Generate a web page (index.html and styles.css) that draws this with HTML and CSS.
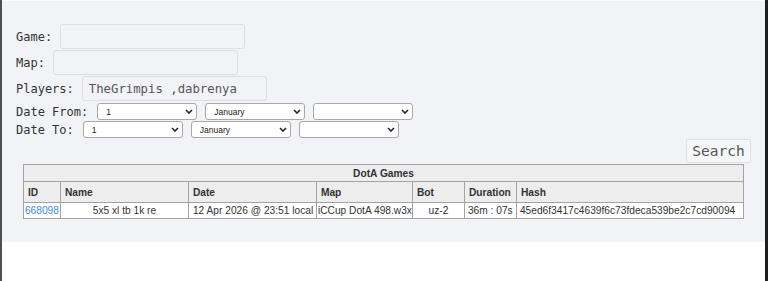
FILE: index.html
```html
<!DOCTYPE html>
<html lang="en">
<head>
    <meta charset="UTF-8">
    <meta name="viewport" content="width=device-width, initial-scale=1.0">
    <title>DotA Games</title>
    <link rel="stylesheet" href="styles.css">
</head>
<body>
    <div class="panel">
        <form class="search-form">
            <div class="field">
                <label>Game:</label>
                <input type="text" class="text-input">
            </div>
            <div class="field">
                <label>Map:</label>
                <input type="text" class="text-input">
            </div>
            <div class="field">
                <label>Players:</label>
                <input type="text" class="text-input" value="TheGrimpis ,dabrenya">
            </div>
            <div class="field date-row date-from">
                <label>Date From:</label>
                <span class="select-wrap">
                    <select><option>1</option></select>
                    <svg class="chevron" viewBox="0 0 8 5"><path d="M1 1l3 3 3-3"/></svg>
                </span>
                <span class="select-wrap">
                    <select><option>January</option></select>
                    <svg class="chevron" viewBox="0 0 8 5"><path d="M1 1l3 3 3-3"/></svg>
                </span>
                <span class="select-wrap">
                    <select><option></option></select>
                    <svg class="chevron" viewBox="0 0 8 5"><path d="M1 1l3 3 3-3"/></svg>
                </span>
            </div>
            <div class="field date-row">
                <label>Date To:</label>
                <span class="select-wrap">
                    <select><option>1</option></select>
                    <svg class="chevron" viewBox="0 0 8 5"><path d="M1 1l3 3 3-3"/></svg>
                </span>
                <span class="select-wrap">
                    <select><option>January</option></select>
                    <svg class="chevron" viewBox="0 0 8 5"><path d="M1 1l3 3 3-3"/></svg>
                </span>
                <span class="select-wrap">
                    <select><option></option></select>
                    <svg class="chevron" viewBox="0 0 8 5"><path d="M1 1l3 3 3-3"/></svg>
                </span>
            </div>
            <div class="actions">
                <button type="button" class="search-btn">Search</button>
            </div>
        </form>

        <table class="games">
            <colgroup>
                <col class="c-id">
                <col class="c-name">
                <col class="c-date">
                <col class="c-map">
                <col class="c-bot">
                <col class="c-dur">
                <col class="c-hash">
            </colgroup>
            <tr class="caption-row">
                <th colspan="7">DotA Games</th>
            </tr>
            <tr class="head-row">
                <th>ID</th>
                <th>Name</th>
                <th>Date</th>
                <th>Map</th>
                <th>Bot</th>
                <th>Duration</th>
                <th>Hash</th>
            </tr>
            <tr class="data-row">
                <td class="id"><a href="#">668098</a></td>
                <td class="center">5x5 xl tb 1k re</td>
                <td class="date">12 Apr 2026 @ 23:51 local</td>
                <td class="map">iCCup DotA 498.w3x</td>
                <td class="center">uz-2</td>
                <td>36m : 07s</td>
                <td>45ed6f3417c4639f6c73fdeca539be2c7cd90094</td>
            </tr>
        </table>
    </div>
</body>
</html>
```

FILE: styles.css
```css
html, body {
    height: 100%;
}
body {
    margin: 0;
    background-color: #fff;
    border-left: 2px solid #4f4f4f;
    border-right: 3px solid #1e1e1e;
    font-family: "DejaVu Sans Mono", monospace;
    color: #333;
}
.panel {
    background-color: #f2f3f7;
    border-top: 1px solid #fbfbfc;
    padding: 23px 14px 23px 14px;
}
.search-form {
    display: flex;
    flex-direction: column;
    gap: 1px;
}
.field {
    display: flex;
    align-items: center;
    gap: 8px;
    font-size: 12px;
}
.field label {
    color: #333;
}
.date-row label {
    margin-right: 1px;
}
.text-input {
    box-sizing: border-box;
    width: 185px;
    height: 25px;
    margin: 0;
    padding: 0 6px;
    border: 1px solid #dcdde2;
    border-radius: 3px;
    background-color: #f2f3f7;
    font-family: "DejaVu Sans Mono", monospace;
    font-size: 12.3px;
    color: #555;
}
.date-row {
    height: 17px;
}
.date-from {
    margin-top: 1px;
}
.select-wrap {
    position: relative;
    display: inline-block;
    width: 100px;
    height: 17px;
}
.select-wrap select {
    appearance: none;
    -webkit-appearance: none;
    box-sizing: border-box;
    width: 100px;
    height: 17px;
    margin: 0;
    padding: 0 0 0 8px;
    border: 1px solid #a9a9ad;
    border-radius: 3px;
    background-color: #fff;
    font-family: "Liberation Sans", Arial, sans-serif;
    font-size: 8.5px;
    color: #222;
}
.chevron {
    position: absolute;
    right: 4px;
    top: 6px;
    width: 8px;
    height: 5px;
    fill: none;
    stroke: #222;
    stroke-width: 1.6;
    pointer-events: none;
}
.actions {
    display: flex;
    justify-content: flex-end;
}
.search-btn {
    box-sizing: border-box;
    height: 24px;
    width: 65px;
    padding: 0;
    border: 1px solid #dfe0e4;
    border-radius: 2px;
    background-color: #f5f6f8;
    font-family: "DejaVu Sans Mono", monospace;
    font-size: 14.5px;
    color: #555;
}
.games {
    table-layout: fixed;
    width: 720px;
    margin: 1px auto 0;
    border-collapse: collapse;
    font-family: "Liberation Sans", Arial, sans-serif;
    font-size: 10.2px;
    color: #333;
}
.c-id { width: 37px; }
.c-name { width: 128px; }
.c-date { width: 128px; }
.c-map { width: 96px; }
.c-bot { width: 52px; }
.c-dur { width: 52px; }
.c-hash { width: 227px; }
.games th, .games td {
    border: 1px solid #a3a3a3;
    white-space: nowrap;
    overflow: visible;
}
.caption-row th {
    height: 16px;
    padding: 0;
    text-align: center;
    background-color: #ededed;
}
.head-row th {
    height: 20px;
    padding: 0 4px;
    text-align: left;
    background-color: #ededed;
}
.data-row td {
    height: 15px;
    padding: 0 3px;
    background-color: #fff;
    text-align: left;
}
.games td.id {
    padding: 0 1px;
}
.games td.map {
    padding: 0 1px;
}
.games td.date {
    padding: 0 4px;
}
.games td.center {
    text-align: center;
}
.games a {
    color: #3b8de8;
    text-decoration: none;
}
```
